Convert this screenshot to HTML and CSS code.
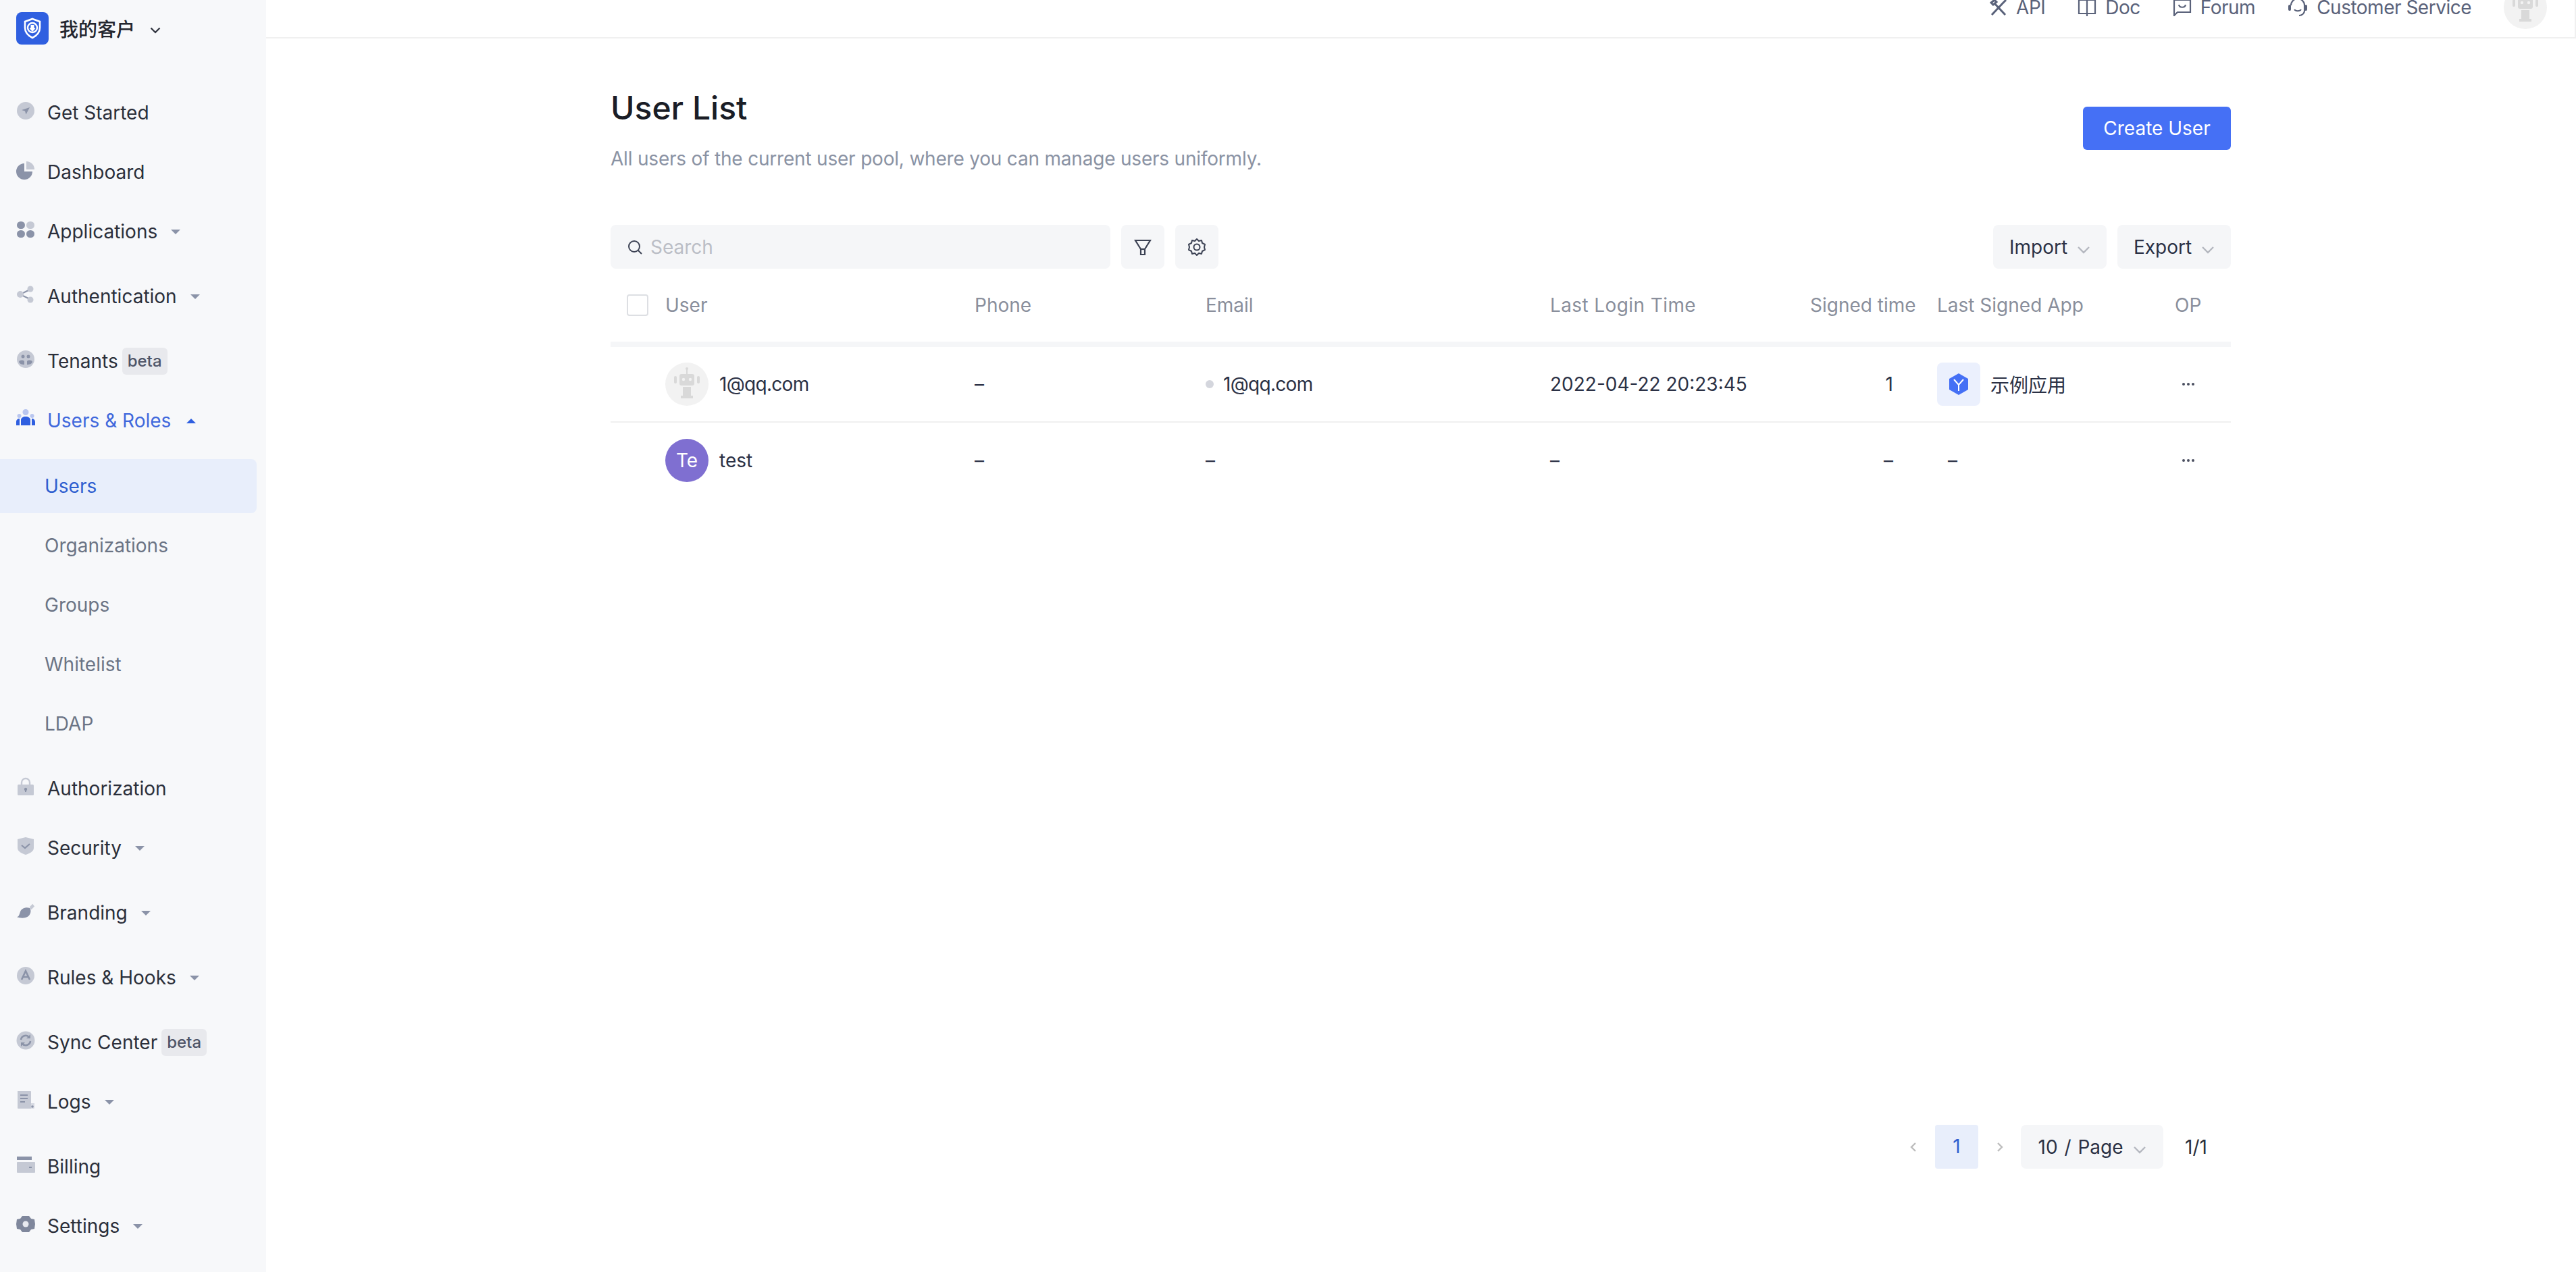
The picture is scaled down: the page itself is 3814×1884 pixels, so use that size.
FILE: index.html
```html
<!DOCTYPE html>
<html lang="en">
<head>
  <meta charset="UTF-8" />
  <title>User List</title>
  <link rel="stylesheet" href="styles.css">
</head>
<body>
  <aside class="sidebar">
    <div class="brand">
      <span class="brand-logo">
        <svg viewBox="0 0 48 48" width="48" height="48">
          <path d="M24 10l11 4v9c0 7-5 12-11 15-6-3-11-8-11-15v-9z" fill="none" stroke="#fff" stroke-width="2.6"/>
          <circle cx="24" cy="23" r="7" fill="none" stroke="#fff" stroke-width="2.4"/>
          <path d="M21.5 19h5v4l2 1-4.500 5-4.500-5 2-1z" fill="#fff"/>
        </svg>
      </span>
      <span class="brand-name">我的客户</span>
      <svg class="brand-chevron" viewBox="0 0 16 10" width="16" height="10"><path d="M1.500 1.500L8 8l6.500-6.500" fill="none" stroke="#2b2f3a" stroke-width="2.200"/></svg>
    </div>

    <nav class="menu">
      <a class="item">
        <svg class="icon" viewBox="0 0 28 28"><circle cx="14" cy="14" r="13" fill="#c5c9d4"/><path d="M20 9l-12 4 5 1.500 1.500 5z" fill="#8b93a8"/></svg>
        Get Started
      </a>
      <a class="item">
        <svg class="icon" viewBox="0 0 28 28"><path d="M12 4a12 12 0 1 0 12 12H12z" fill="#8b93a8"/><path d="M15 1a12 12 0 0 1 12 12H15z" fill="#c5c9d4"/></svg>
        Dashboard
      </a>
      <a class="item gap">
        <svg class="icon" viewBox="0 0 28 28"><rect x="1" y="2" width="12" height="11" rx="5.500" fill="#8b93a8"/><rect x="15" y="2" width="12" height="11" rx="5.500" fill="#c5c9d4"/><rect x="1" y="15" width="12" height="11" rx="5.500" fill="#8b93a8"/><rect x="15" y="15" width="12" height="11" rx="5.500" fill="#8b93a8"/></svg>
        Applications <i class="caret"></i>
      </a>
      <a class="item gap">
        <svg class="icon" viewBox="0 0 28 28"><path d="M6 14l16-8M6 14l16 8" stroke="#8b93a8" stroke-width="2"/><circle cx="6" cy="14" r="5" fill="#c5c9d4"/><circle cx="21" cy="6" r="4.500" fill="#c5c9d4"/><circle cx="21" cy="22" r="4.500" fill="#c5c9d4"/></svg>
        Authentication <i class="caret"></i>
      </a>
      <a class="item">
        <svg class="icon" viewBox="0 0 28 28"><circle cx="14" cy="14" r="13" fill="#c5c9d4"/><circle cx="10" cy="10" r="2.500" fill="#8b93a8"/><circle cx="18" cy="10" r="2.500" fill="#8b93a8"/><path d="M4 18c1-3 6-3 8-1v5c-4 0-7-1-8-4zM16 17c2-2 7-2 8 1-1 3-4 4-8 4z" fill="#8b93a8"/></svg>
        Tenants <span class="beta">beta</span>
      </a>
      <a class="item active-parent">
        <svg class="icon" viewBox="0 0 28 28"><circle cx="14" cy="4.500" r="4.500" fill="#b9c6ef"/><circle cx="4.500" cy="10" r="3" fill="#b9c6ef"/><circle cx="23.500" cy="10" r="3" fill="#b9c6ef"/><path d="M7 24v-8c0-3 3-5 7-5s7 2 7 5v8z" fill="#2f5fe0"/><path d="M0 24v-5c0-3 2-5 5-5v10zM28 24v-5c0-3-2-5-5-5v10z" fill="#2f5fe0"/></svg>
        Users &amp; Roles <i class="caret up"></i>
      </a>
      <a class="sub current">Users</a>
      <a class="sub">Organizations</a>
      <a class="sub">Groups</a>
      <a class="sub">Whitelist</a>
      <a class="sub last">LDAP</a>
      <a class="item">
        <svg class="icon" viewBox="0 0 28 28"><path d="M8 13V8a6 6 0 0 1 12 0v5" fill="none" stroke="#c5c9d4" stroke-width="2.400"/><rect x="2" y="11" width="24" height="16" rx="1.500" fill="#c5c9d4"/><circle cx="14" cy="18" r="2.200" fill="#8b93a8"/><rect x="13" y="18" width="2" height="4" fill="#8b93a8"/></svg>
        Authorization
      </a>
      <a class="item gap">
        <svg class="icon" viewBox="0 0 28 28"><path d="M2 4l12-3 12 3v13c0 5-6 8-12 10C8 25 2 22 2 17z" fill="#c5c9d4"/><path d="M8 13l5 4 7-6" fill="none" stroke="#8b93a8" stroke-width="2.200"/></svg>
        Security <i class="caret"></i>
      </a>
      <a class="item gap">
        <svg class="icon" viewBox="0 0 30 28"><path d="M21 8l5-5 3 4-5 5z" fill="#c5c9d4"/><path d="M1 24c4-1 4-5 6-10 2-4 9-7 15-4 3 6-1 14-8 15-5 1-9 0-13-1z" fill="#8b93a8"/></svg>
        Branding <i class="caret"></i>
      </a>
      <a class="item gap">
        <svg class="icon" viewBox="0 0 28 28"><circle cx="14" cy="14" r="13" fill="#c5c9d4"/><path d="M8 20l6-13 6 13M10.500 16h7" fill="none" stroke="#8b93a8" stroke-width="2.600"/></svg>
        Rules &amp; Hooks <i class="caret"></i>
      </a>
      <a class="item">
        <svg class="icon" viewBox="0 0 28 28"><circle cx="14" cy="14" r="13.500" fill="#c5c9d4"/><path d="M7 13a7 7 0 0 1 12-4M21 15a7 7 0 0 1-12 4" fill="none" stroke="#8b93a8" stroke-width="2.600"/><path d="M21 5v6h-6zM7 23v-6h6z" fill="#8b93a8"/></svg>
        Sync Center <span class="beta">beta</span>
      </a>
      <a class="item gap">
        <svg class="icon" viewBox="0 0 28 28"><path d="M2 1h19a1 1 0 0 1 1 1v25H3a1 1 0 0 1-1-1z" fill="#c5c9d4"/><path d="M22 19h5v7a1 1 0 0 1-1 1h-4z" fill="#d7dae2"/><path d="M6 7h11M6 12h11M6 17h7" stroke="#8b93a8" stroke-width="2.200"/><circle cx="24" cy="24" r="1.800" fill="#8b93a8"/></svg>
        Logs <i class="caret"></i>
      </a>
      <a class="item">
        <svg class="icon" viewBox="0 0 28 28"><rect x="1" y="2" width="22" height="5" fill="#8b93a8"/><rect x="1" y="10" width="27" height="16" rx="1" fill="#c5c9d4"/><rect x="19" y="17" width="4" height="2" fill="#8b93a8"/></svg>
        Billing
      </a>
      <a class="item">
        <svg class="icon" viewBox="0 0 28 28"><path d="M9 2h10l3 4 5 1 1 7-1 7-5 1-3 4H9l-3-4-5-1-1-7 1-7 5-1z" fill="#7f879c"/><circle cx="14" cy="14" r="4.500" fill="#e8eaf0"/></svg>
        Settings <i class="caret"></i>
      </a>
    </nav>
  </aside>

  <div class="content">
    <header class="topbar">
      <a class="toplink">
        <svg viewBox="0 0 26 26" width="26" height="26"><path d="M3 24L19 7M23 24L7 7M2 6l5-4 3 3-5 4zM24 2l-6 6" fill="none" stroke="#5a627a" stroke-width="3"/></svg>
        API
      </a>
      <a class="toplink">
        <svg viewBox="0 0 28 26" width="28" height="26"><path d="M2 2h24v20H2zM14 2v24" fill="none" stroke="#5a627a" stroke-width="2.200"/></svg>
        Doc
      </a>
      <a class="toplink">
        <svg viewBox="0 0 28 26" width="28" height="26"><path d="M2 2h24v18H7l-5 5z" fill="none" stroke="#5a627a" stroke-width="2.200"/><path d="M9 9c1 5 9 5 10 0" fill="none" stroke="#5a627a" stroke-width="2.200"/></svg>
        Forum
      </a>
      <a class="toplink">
        <svg viewBox="0 0 30 28" width="30" height="28"><path d="M5 11a10 10 0 0 1 20 0v8c0 4-4 7-8 7" fill="none" stroke="#5a627a" stroke-width="2.200"/><rect x="1" y="10" width="4" height="9" rx="2" fill="#5a627a"/><rect x="25" y="10" width="4" height="9" rx="2" fill="#5a627a"/><path d="M10 17c2 3 8 3 10 0" fill="none" stroke="#5a627a" stroke-width="2"/></svg>
        Customer Service
      </a>
      <span class="avatar robot top-avatar">
        <svg viewBox="0 0 64 64" width="64" height="64"><use href="#robot"/></svg>
      </span>
    </header>

    <main class="page">
      <div class="page-head">
        <div>
          <h1>User List</h1>
          <p class="desc">All users of the current user pool, where you can manage users uniformly.</p>
        </div>
        <button class="primary">Create User</button>
      </div>

      <div class="toolbar">
        <div class="search">
          <svg viewBox="0 0 24 24" width="24" height="24"><circle cx="11" cy="11" r="8" fill="none" stroke="#3c4254" stroke-width="2"/><path d="M17 17l5 5" stroke="#3c4254" stroke-width="2"/></svg>
          <span>Search</span>
        </div>
        <button class="tool">
          <svg viewBox="0 0 28 28" width="28" height="28"><path d="M3 4h22l-8 13v8h-6v-8z" fill="none" stroke="#3c4254" stroke-width="2.200"/><path d="M11 17h6" stroke="#3c4254" stroke-width="2.200"/></svg>
        </button>
        <button class="tool">
          <svg viewBox="0 0 28 28" width="28" height="28"><path d="M14 2l3 3 4-1 1 4 4 2-1 4 1 4-4 2-1 4-4-1-3 3-3-3-4 1-1-4-4-2 1-4-1-4 4-2 1-4 4 1z" fill="none" stroke="#3c4254" stroke-width="2" stroke-linejoin="round"/><circle cx="14" cy="14" r="4.500" fill="none" stroke="#3c4254" stroke-width="2"/></svg>
        </button>
        <div class="spacer"></div>
        <button class="drop">Import <svg class="chev" viewBox="0 0 20 12" width="20" height="12"><path d="M2 2l8 8 8-8" fill="none" stroke="#b4b7bf" stroke-width="2.400"/></svg></button>
        <button class="drop">Export <svg class="chev" viewBox="0 0 20 12" width="20" height="12"><path d="M2 2l8 8 8-8" fill="none" stroke="#b4b7bf" stroke-width="2.400"/></svg></button>
      </div>

      <div class="row head">
        <span><i class="check"></i></span>
        <span>User</span>
        <span>Phone</span>
        <span>Email</span>
        <span class="wide">Last Login Time</span>
        <span>Signed time</span>
        <span>Last Signed App</span>
        <span>OP</span>
      </div>

      <div class="row line">
        <span></span>
        <span class="user">
          <span class="avatar robot">
            <svg viewBox="0 0 64 64" width="64" height="64">
              <g id="robot" fill="#d9d9d9">
                <rect x="31" y="10" width="2" height="7"/><circle cx="32" cy="9" r="2"/>
                <rect x="21" y="17" width="22" height="17" rx="3"/>
                <rect x="13" y="20" width="4" height="11" rx="2"/><rect x="47" y="20" width="4" height="11" rx="2"/>
                <rect x="26" y="36" width="12" height="13"/><rect x="23" y="49" width="18" height="4"/>
                <circle cx="27" cy="25" r="2.200" fill="#f2f2f2"/><circle cx="37" cy="25" r="2.200" fill="#f2f2f2"/>
              </g>
            </svg>
          </span>
          <span class="mail">1@qq.com</span>
        </span>
        <span>–</span>
        <span class="email"><i class="dot"></i><span class="mail">1@qq.com</span></span>
        <span>2022-04-22 20:23:45</span>
        <span class="num">1</span>
        <span class="app">
          <span class="app-icon">
            <svg viewBox="0 0 64 64" width="64" height="64"><path d="M32 16l14 8v16l-14 8-14-8V24z" fill="#4570f5"/><path d="M25 25l7 8 7-8M32 33v9" fill="none" stroke="#fff" stroke-width="2"/></svg>
          </span>
          示例应用
        </span>
        <span class="op"><svg viewBox="0 0 20 6" width="20" height="6"><circle cx="3" cy="3" r="2"/><circle cx="10" cy="3" r="2"/><circle cx="17" cy="3" r="2"/></svg></span>
      </div>

      <div class="row">
        <span></span>
        <span class="user"><span class="avatar te">Te</span>test</span>
        <span>–</span>
        <span>–</span>
        <span>–</span>
        <span class="num">–</span>
        <span class="app-empty">–</span>
        <span class="op"><svg viewBox="0 0 20 6" width="20" height="6"><circle cx="3" cy="3" r="2"/><circle cx="10" cy="3" r="2"/><circle cx="17" cy="3" r="2"/></svg></span>
      </div>

      <div class="pager">
        <svg class="arrow" viewBox="0 0 10 16" width="10" height="16"><path d="M8 2L2 8l6 6" fill="none" stroke="#bdbdbd" stroke-width="2.400"/></svg>
        <span class="page-no">1</span>
        <svg class="arrow" viewBox="0 0 10 16" width="10" height="16"><path d="M2 2l6 6-6 6" fill="none" stroke="#bdbdbd" stroke-width="2.400"/></svg>
        <button class="drop size">10 / Page <svg class="chev" viewBox="0 0 20 12" width="20" height="12"><path d="M2 2l8 8 8-8" fill="none" stroke="#b4b7bf" stroke-width="2.400"/></svg></button>
        <span class="total">1/1</span>
      </div>
    </main>
  </div>
</body>
</html>
```

FILE: styles.css
```css
* {
  box-sizing: border-box;
}
html, body {
  height: 100%;
}
body {
  margin: 0;
  display: flex;
  overflow: hidden;
  font-family: Inter, "Noto Sans CJK SC", sans-serif;
  font-size: 28px;
  color: #2b3145;
  background-color: #ffffff;
}
button {
  font: inherit;
  border: none;
  cursor: pointer;
}

/* sidebar */
.sidebar {
  width: 394px;
  flex-shrink: 0;
  background-color: #f7f8fa;
}
.brand {
  display: flex;
  align-items: center;
  height: 48px;
  margin: 18px 0 0 24px;
}
.brand-logo {
  display: flex;
  width: 48px;
  height: 48px;
  border-radius: 8px;
  background-color: #2f5fe0;
}
.brand-name {
  margin-left: 16px;
  font-size: 28px;
  font-weight: 500;
  color: #23262f;
}
.brand-chevron {
  margin: 6px 0 0 22px;
}
.menu {
  display: flex;
  flex-direction: column;
  margin-top: 57px;
}
.item {
  display: flex;
  align-items: center;
  height: 88px;
  padding-left: 24px;
  color: #2b2f3a;
}
.item.gap {
  margin-bottom: 8px;
}
.item.active-parent {
  margin-bottom: 13px;
}
.icon {
  width: 28px;
  height: 28px;
  margin: -6px 18px 0 0;
  flex-shrink: 0;
}
.caret {
  width: 0;
  height: 0;
  margin-left: 20px;
  border-left: 7px solid transparent;
  border-right: 7px solid transparent;
  border-top: 7px solid #8b93a8;
}
.caret.up {
  margin-left: 23px;
  border-top: none;
  border-bottom: 7px solid #2f5fe0;
}
.beta {
  margin-left: 6px;
  padding: 0 8px;
  height: 40px;
  line-height: 40px;
  border-radius: 6px;
  font-size: 24px;
  font-weight: 500;
  color: #4f5568;
  background-color: #e8e9ed;
}
.active-parent {
  color: #3f68dc;
}
.sub {
  display: flex;
  align-items: center;
  width: 380px;
  height: 80px;
  margin-bottom: 8px;
  padding-left: 66px;
  color: #6b7485;
}
.sub.current {
  color: #2f5fd0;
  background-color: #e8eefb;
  border-radius: 0 8px 8px 0;
}
.sub.last {
  margin-bottom: 12px;
}

/* top bar */
.content {
  flex: 1;
  min-width: 0;
}
.topbar {
  display: flex;
  justify-content: flex-end;
  align-items: center;
  gap: 48px;
  width: 3420px;
  height: 57px;
  padding: 0 41px 33px 0;
  border-bottom: 2px solid #f0f0f0;
  border-right: 2px solid #f0f0f0;
}
.toplink {
  display: flex;
  align-items: center;
  gap: 13px;
  letter-spacing: -0.5px;
  color: #5a627a;
}
.avatar {
  display: flex;
  align-items: center;
  justify-content: center;
  width: 64px;
  height: 64px;
  flex-shrink: 0;
  border-radius: 50%;
}
.robot {
  background-color: #f2f2f2;
}
.te {
  color: #ffffff;
  background-color: #7f6fd1;
}

/* page */
.page {
  width: 2399px;
  margin-left: 510px;
}
.page-head {
  display: flex;
  justify-content: space-between;
  align-items: flex-start;
  height: 276px;
  padding-top: 84px;
}
h1 {
  margin: 0;
  font-size: 48px;
  line-height: 38px;
  font-weight: 500;
  color: #1a1d26;
}
.desc {
  margin: 36px 0 0;
  line-height: 40px;
  letter-spacing: -0.2px;
  color: #8a92a3;
}
.primary {
  width: 219px;
  height: 64px;
  margin-top: 17px;
  border-radius: 6px;
  color: #ffffff;
  background-color: #4570f5;
}
.toolbar {
  display: flex;
  gap: 16px;
  height: 65px;
}
.search {
  display: flex;
  align-items: center;
  gap: 11px;
  width: 740px;
  padding-left: 24px;
  border-radius: 8px;
  color: #bbbec6;
  background-color: #f5f6f8;
}
.tool {
  display: flex;
  align-items: center;
  justify-content: center;
  width: 64px;
  border-radius: 8px;
  background-color: #f5f6f8;
}
.spacer {
  flex: 1;
}
.drop {
  display: flex;
  align-items: center;
  justify-content: center;
  gap: 14px;
  width: 168px;
  padding: 0;
  border-radius: 8px;
  color: #2b3145;
  background-color: #f5f6f8;
}
.chev {
  margin-top: 8px;
}

/* table */
.row {
  display: grid;
  grid-template-columns: 81px 458px 342px 510px 385px 188px 352px 83px;
  align-items: center;
  height: 112px;
}
.row.head {
  height: 116px;
  border-bottom: 8px solid #f5f6f8;
  color: #8a8f9c;
}
.row.line {
  height: 112px;
  border-bottom: 2px solid #f0f0f0;
}
.wide {
  letter-spacing: 0.4px;
}
.mail {
  letter-spacing: -0.7px;
}
.check {
  display: block;
  width: 32px;
  height: 32px;
  margin-left: 24px;
  border: 2px solid #dddfe3;
  border-radius: 4px;
}
.user {
  display: flex;
  align-items: center;
  gap: 16px;
}
.email {
  display: flex;
  align-items: center;
}
.dot {
  width: 12px;
  height: 12px;
  margin-right: 14px;
  border-radius: 50%;
  background-color: #d4d6dd;
}
.num {
  padding-right: 65px;
  text-align: right;
}
.app {
  display: flex;
  align-items: center;
  gap: 15px;
}
.app-icon {
  display: flex;
  width: 64px;
  height: 64px;
  border-radius: 8px;
  background-color: #ebf0fd;
}
.app-empty {
  padding-left: 16px;
}
.op {
  display: flex;
  padding-left: 10px;
  fill: #4a4f60;
}

/* pagination */
.pager {
  display: flex;
  align-items: center;
  height: 65px;
  margin-top: 928px;
  padding-left: 1924px;
}
.page-no {
  width: 64px;
  height: 65px;
  margin: 0 27px;
  line-height: 65px;
  text-align: center;
  border-radius: 4px;
  color: #2f5fd0;
  background-color: #e8eefb;
}
.size {
  width: 211px;
  height: 65px;
  margin-left: 26px;
  word-spacing: 2px;
}
.total {
  margin-left: 32px;
  color: #2b2f3a;
}
```
